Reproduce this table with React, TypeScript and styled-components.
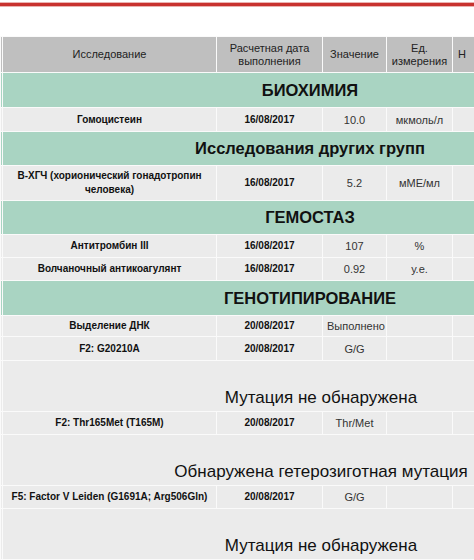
import styled, { createGlobalStyle } from 'styled-components';

const GlobalStyle = createGlobalStyle`
  * { box-sizing: border-box; }
  html, body {
    margin: 0;
    background: #fff;
    overflow: hidden;
    font-family: "Liberation Sans", Arial, sans-serif;
  }
`;

const Page = styled.div`
  width: 474px;
  height: 560px;
  overflow: hidden;
  padding-top: 3px;
  background: #fff;
`;

const RedRule = styled.div`
  height: 3px;
  background: #c8322f;
  box-shadow: 0 -1px 0 #eab3b1, 0 1px 0 #eab3b1;
  margin-bottom: 30px;
`;

const Table = styled.table`
  border-collapse: separate;
  border-spacing: 1px;
  background: #fafafa;
  table-layout: fixed;
  width: 618px;
  color: #111;
`;

const Col = styled.col<{ $w: number }>`
  width: ${(p) => p.$w}px;
`;

const Row = styled.tr<{ $h: number }>`
  height: ${(p) => p.$h}px;
  & > td, & > th { height: ${(p) => p.$h}px; }
`;

const HeadCell = styled.th<{ $left?: boolean }>`
  background: #bfbfbf;
  font-weight: normal;
  font-size: 11px;
  line-height: 13px;
  color: #222;
  padding: ${(p) => (p.$left ? '0 0 0 5px' : '0 2px')};
  text-align: ${(p) => (p.$left ? 'left' : 'center')};
  vertical-align: middle;
`;

const SectionCell = styled.td`
  background: #a9d4c2;
  font-weight: bold;
  font-size: 16.5px;
  text-align: center;
  vertical-align: middle;
  padding: 0;
`;

const EdgeCell = styled.td<{ $tone: 'head' | 'section' | 'data' }>`
  padding: 0;
  background: ${(p) =>
    p.$tone === 'head' ? '#bfbfbf' : p.$tone === 'section' ? '#a9d4c2' : '#ebebeb'};
`;

const DataCell = styled.td<{ $bold?: boolean }>`
  background: #ebebeb;
  font-size: ${(p) => (p.$bold ? '10px' : '11px')};
  font-weight: ${(p) => (p.$bold ? 'bold' : 'normal')};
  color: ${(p) => (p.$bold ? '#111' : '#333')};
  line-height: 14px;
  text-align: center;
  vertical-align: middle;
  padding: 0 4px;
`;

const NoteCell = styled.td`
  background: #ebebeb;
  font-size: 17px;
  line-height: 20px;
  color: #111;
  text-align: center;
  vertical-align: bottom;
  padding: 0 0 3px 22px;
`;

type Item =
  | { kind: 'section'; title: string; h: number }
  | { kind: 'data'; name: string[]; date: string; value: string; unit: string; h: number }
  | { kind: 'note'; text: string; h: number };

const columns = [1, 213, 105, 63, 65, 164];

const items: Item[] = [
  { kind: 'section', title: 'БИОХИМИЯ', h: 34 },
  { kind: 'data', name: ['Гомоцистеин'], date: '16/08/2017', value: '10.0', unit: 'мкмоль/л', h: 23 },
  { kind: 'section', title: 'Исследования других групп', h: 33 },
  {
    kind: 'data',
    name: ['В-ХГЧ (хорионический гонадотропин', 'человека)'],
    date: '16/08/2017',
    value: '5.2',
    unit: 'мМЕ/мл',
    h: 34,
  },
  { kind: 'section', title: 'ГЕМОСТАЗ', h: 33 },
  { kind: 'data', name: ['Антитромбин III'], date: '16/08/2017', value: '107', unit: '%', h: 22 },
  { kind: 'data', name: ['Волчаночный антикоагулянт'], date: '16/08/2017', value: '0.92', unit: 'у.е.', h: 22 },
  { kind: 'section', title: 'ГЕНОТИПИРОВАНИЕ', h: 34 },
  { kind: 'data', name: ['Выделение ДНК'], date: '20/08/2017', value: 'Выполнено', unit: '', h: 20 },
  { kind: 'data', name: ['F2: G20210A'], date: '20/08/2017', value: 'G/G', unit: '', h: 23 },
  { kind: 'note', text: 'Мутация не обнаружена', h: 50 },
  { kind: 'data', name: ['F2: Thr165Met (T165M)'], date: '20/08/2017', value: 'Thr/Met', unit: '', h: 22 },
  { kind: 'note', text: 'Обнаружена гетерозиготная мутация', h: 50 },
  { kind: 'data', name: ['F5: Factor V Leiden (G1691A; Arg506Gln)'], date: '20/08/2017', value: 'G/G', unit: '', h: 22 },
  { kind: 'note', text: 'Мутация не обнаружена', h: 50 },
];

const App = () => {
  return (
    <Page>
      <GlobalStyle />
      <RedRule />
      <Table>
        <colgroup>
          {columns.map((w, i) => (
            <Col $w={w} key={i} />
          ))}
        </colgroup>
        <thead>
          <Row $h={35}>
            <EdgeCell $tone="head" />
            <HeadCell>Исследование</HeadCell>
            <HeadCell>
              Расчетная дата
              <br />
              выполнения
            </HeadCell>
            <HeadCell>Значение</HeadCell>
            <HeadCell>
              Ед.
              <br />
              измерения
            </HeadCell>
            <HeadCell $left>Н</HeadCell>
          </Row>
        </thead>
        <tbody>
          {items.map((it, i) => {
            if (it.kind === 'section') {
              return (
                <Row $h={it.h} key={i}>
                  <EdgeCell $tone="section" />
                  <SectionCell colSpan={5}>{it.title}</SectionCell>
                </Row>
              );
            }
            if (it.kind === 'note') {
              return (
                <Row $h={it.h} key={i}>
                  <EdgeCell $tone="data" />
                  <NoteCell colSpan={5}>{it.text}</NoteCell>
                </Row>
              );
            }
            return (
              <Row $h={it.h} key={i}>
                <EdgeCell $tone="data" />
                <DataCell $bold>
                  {it.name.map((line, j) => (
                    <div key={j}>{line}</div>
                  ))}
                </DataCell>
                <DataCell $bold>{it.date}</DataCell>
                <DataCell>{it.value}</DataCell>
                <DataCell>{it.unit}</DataCell>
                <DataCell />
              </Row>
            );
          })}
        </tbody>
      </Table>
    </Page>
  );
};

export default App;
